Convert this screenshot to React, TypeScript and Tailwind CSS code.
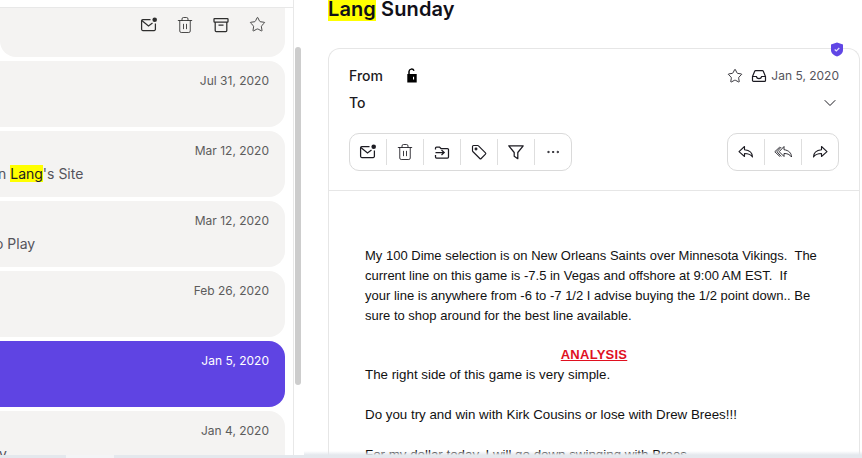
import { ChevronDown, Ellipsis, Star, Trash2 } from "lucide-react";

const sans = "font-['Inter','Liberation_Sans',sans-serif]";

const mails = [
  { id: 1, date: "Jul 31, 2020" },
  { id: 2, date: "Mar 12, 2020", shift: "-ml-[2px]", text: <>n <mark className="bg-[#ffff00] text-[#1c1b22]">Lang</mark>'s Site</> },
  { id: 3, date: "Mar 12, 2020", shift: "-ml-[5px]", text: <>o Play</> },
  { id: 4, date: "Feb 26, 2020" },
  { id: 5, date: "Jan 5, 2020", active: true },
  { id: 6, date: "Jan 4, 2020", shift: "-ml-[1px]", text: <>y</> },
];

function MailDot({ size = 18 }: { size?: number }) {
  return (
    <svg width={size} height={size} viewBox="0 0 18 18" fill="none" stroke="currentColor" strokeWidth="1.250">
      <path d="M10.500 3.500H2.800a1.200 1.200 0 0 0-1.200 1.200v8.600a1.200 1.200 0 0 0 1.200 1.200h11.400a1.200 1.200 0 0 0 1.200-1.200V7.500" />
      <path d="M1.800 4.500 8.500 10l4-3" />
      <circle cx="14.700" cy="3.700" r="2.300" fill="currentColor" stroke="none" />
    </svg>
  );
}

function ArchiveBox() {
  return (
    <svg width="18" height="18" viewBox="0 0 18 18" fill="none" stroke="currentColor" strokeWidth="1.250">
      <rect x="2" y="2.500" width="14" height="3.500" rx="0.600" />
      <path d="M3.200 6v8.500a1 1 0 0 0 1 1h9.600a1 1 0 0 0 1-1V6M6.500 9h5" />
    </svg>
  );
}

function MoveFolder() {
  return (
    <svg width="18" height="18" viewBox="0 0 18 18" fill="none" stroke="currentColor" strokeWidth="1.250">
      <path d="M2.500 6.500V5a1 1 0 0 1 1-1h3l1.500 1.500h6.500a1 1 0 0 1 1 1V14a1 1 0 0 1-1 1h-11a1 1 0 0 1-1-1v-2" />
      <path d="M2.500 9.500h8.500M8.500 7l2.700 2.500L8.500 12" />
    </svg>
  );
}

function TagIcon() {
  return (
    <svg width="18" height="18" viewBox="0 0 18 18" fill="none" stroke="currentColor" strokeWidth="1.150">
      <path d="M2.500 3.500a1 1 0 0 1 1-1h4.300a1 1 0 0 1 .7.300l7 7a1 1 0 0 1 0 1.400l-4.300 4.300a1 1 0 0 1-1.400 0l-7-7a1 1 0 0 1-.3-.7z" />
      <circle cx="6" cy="6" r="0.900" />
    </svg>
  );
}

function FunnelIcon() {
  return (
    <svg width="18" height="18" viewBox="0 0 18 18" fill="none" stroke="currentColor" strokeWidth="1.250">
      <path d="M1.800 2.800h14.400L10.800 9.500v6.200l-3.600-2.500V9.500z" strokeLinejoin="round" />
    </svg>
  );
}

function InboxTray() {
  return (
    <svg width="16" height="16" viewBox="0 0 16 16" fill="none" stroke="currentColor" strokeWidth="1.200">
      <path d="M1.500 8.500 3.700 3.200a1 1 0 0 1 .9-.6h6.800a1 1 0 0 1 .9.600l2.200 5.300v3.900a1 1 0 0 1-1 1H2.500a1 1 0 0 1-1-1z" />
      <path d="M1.500 8.500h3.800a2.800 2.800 0 0 0 5.400 0h3.800" />
    </svg>
  );
}

function OpenLock() {
  return (
    <svg width="12" height="15" viewBox="0 0 12 15" className="-mt-[2px] text-black">
      <path d="M3 6V3.500a2.600 2.600 0 0 1 5-.8" fill="none" stroke="currentColor" strokeWidth="1.500" />
      <path fillRule="evenodd" d="M1.300 6h9.400v8.500H1.300zM7 8.800h1.100v2.600H7z" fill="currentColor" />
    </svg>
  );
}

function ShieldCheck() {
  return (
    <svg width="14" height="15" viewBox="0 0 14 15">
      <path d="M7 .5 13 2.500v5.500c0 3.200-2.700 5.300-6 6.500-3.300-1.200-6-3.300-6-6.500V2.500z" fill="#6046e5" />
      <path d="M4.700 7.500 6.300 9l3-3" fill="none" stroke="#e4dffb" strokeWidth="1.200" />
    </svg>
  );
}

function ReplyIcon({ all, flip }: { all?: boolean; flip?: boolean }) {
  return (
    <svg width="18" height="18" viewBox="0 0 18 18" fill="none" stroke="currentColor" strokeWidth={all ? 0.9 : 1.1} strokeLinejoin="round" className={flip ? "-scale-x-100" : ""}>
      {all ? (
        <>
          <path d="M10 3.500 5.200 8.700l4.800 4.800v-3c3 0 5.500.6 7.500 3.500 0-3.800-2.600-6.700-7.500-7.300z" />
          <path d="M5.800 4 .8 8.700l5 4.800M7.200 4 3 8.700l4.200 4.800" />
        </>
      ) : (
        <path d="M7.500 3.500 2 8.700l5.500 4.800v-3c3.200 0 6 .6 8 3.500 0-3.800-2.800-6.700-8-7.300z" />
      )}
    </svg>
  );
}

function ToolButton({ children, last }: { children: React.ReactNode; last?: boolean }) {
  return (
    <div className={`flex h-[26px] items-center justify-center ${last ? "w-[36px]" : "w-[37px] border-r border-[#dedede]"}`}>
      {children}
    </div>
  );
}

export default function App() {
  return (
    <div className={`relative flex h-[458px] w-[862px] overflow-hidden bg-white ${sans}`}>
      {/* Mail list */}
      <div className="flex w-[294px] shrink-0 flex-col border-r border-[#e8e8e8]">
        <div className="h-2 shrink-0 border-b border-[#e8e8e8]" />
        <div className="flex flex-col gap-1 pr-2">
          <div className="flex h-[49px] items-start justify-end gap-[18px] rounded-b-2xl bg-[#f4f3f2] pr-[19px] pt-[8px] text-[#2e2e2e]">
            <MailDot />
            <div className="flex w-[18px] justify-center"><Trash2 size={18} strokeWidth={1.150} /></div>
            <ArchiveBox />
            <div className="flex w-[18px] justify-center"><Star size={17} strokeWidth={1.200} /></div>
          </div>
          {mails.map((m) => (
            <div
              key={m.id}
              className={`flex h-[66px] shrink-0 flex-col rounded-r-2xl pl-0 pr-4 pt-3 ${m.active ? "bg-[#5f44e3] text-white" : "bg-[#f4f3f2] text-[#5c5c5c]"}`}
            >
              <div className="self-end text-right text-xs leading-[15px]">{m.date}</div>
              {m.text && <div className={`mt-[6px] text-sm leading-5 text-[#55545c] ${m.shift}`}>{m.text}</div>}
            </div>
          ))}
        </div>
      </div>

      {/* Scrollbar */}
      <div className="w-[34px] shrink-0 pl-[1px] pt-[47px]">
        <div className="h-[338px] w-[6px] rounded-full bg-[#cdcdcd]" />
      </div>

      {/* Reader */}
      <div className="flex min-w-0 flex-1 flex-col pr-[2px] text-[#1c1b22]">
        <h1 className="-mt-px h-[49px] shrink-0 text-xl font-semibold leading-[20px] tracking-[0.1px] text-[#111018]">
          <mark className="bg-[#ffff00] text-[#111018]">Lang</mark> Sunday
        </h1>
        <div className="relative flex-1 rounded-t-xl border border-b-0 border-[#e6e6e6]">
          <div className="absolute -top-[7px] right-[15px]"><ShieldCheck /></div>
          <div className="border-b border-[#e6e6e6] px-5 pb-[19px] pt-[17px]">
            <div className="flex h-[20px] items-center text-sm font-medium">
              <span className="w-[57px]">From</span>
              <OpenLock />
              <div className="ml-auto flex items-center text-xs font-normal text-[#55545c]">
                <Star size={16} strokeWidth={1.300} className="text-[#1c1b22]" />
                <span className="ml-2 text-[#1c1b22]"><InboxTray /></span>
                <span className="ml-1">Jan 5, 2020</span>
              </div>
            </div>
            <div className="mt-[7px] flex h-[20px] items-center text-sm font-medium">
              <span>To</span>
              <ChevronDown size={20} strokeWidth={1.200} className="-mr-px ml-auto" />
            </div>
            <div className="mt-[20px] flex items-center justify-between">
              <div className="flex h-[38px] items-center rounded-[10px] border border-[#dadada]">
                <ToolButton><MailDot /></ToolButton>
                <ToolButton><Trash2 size={18} strokeWidth={1.150} /></ToolButton>
                <ToolButton><MoveFolder /></ToolButton>
                <ToolButton><TagIcon /></ToolButton>
                <ToolButton><FunnelIcon /></ToolButton>
                <ToolButton last><Ellipsis size={16} strokeWidth={1.500} /></ToolButton>
              </div>
              <div className="flex h-[38px] items-center rounded-[10px] border border-[#dadada]">
                <ToolButton><ReplyIcon /></ToolButton>
                <ToolButton><ReplyIcon all /></ToolButton>
                <ToolButton last><ReplyIcon flip /></ToolButton>
              </div>
            </div>
          </div>
          <div className="pl-9 pr-9 pt-[55px] font-['Liberation_Sans',Arial,sans-serif] text-[13px] leading-[20px] text-[#111]">
            <p>
              My 100 Dime selection is on New Orleans Saints over Minnesota Vikings.&nbsp; The<br />
              current line on this game is -7.5 in Vegas and offshore at 9:00 AM EST.&nbsp; If<br />
              your line is anywhere from -6 to -7 1/2 I advise buying the 1/2 point down.. Be<br />
              sure to shop around for the best line available.
            </p>
            <div className="mt-[19px] text-center font-bold tracking-[0.25px] text-[#e0101f] underline">ANALYSIS</div>
            <p className="text-[13.33px]">The right side of this game is very simple.</p>
            <p className="mt-[20px] text-[13.33px]">Do you try and win with Kirk Cousins or lose with Drew Brees!!!</p>
            <p className="mt-[20px] text-[13.33px]">For my dollar today, I will go down swinging with Brees.</p>
          </div>
        </div>
      </div>

      {/* Window bottom edge */}
      <div className="absolute bottom-[3px] left-[304px] right-0 h-[4px] bg-gradient-to-b from-transparent to-[#e4e8ed]" />
      <div className="absolute inset-x-0 bottom-0 flex h-[3px] bg-[#e4e8ed]">
        <div className="ml-[66px] w-[48px] bg-[#f3f4f6]" />
      </div>
    </div>
  );
}
